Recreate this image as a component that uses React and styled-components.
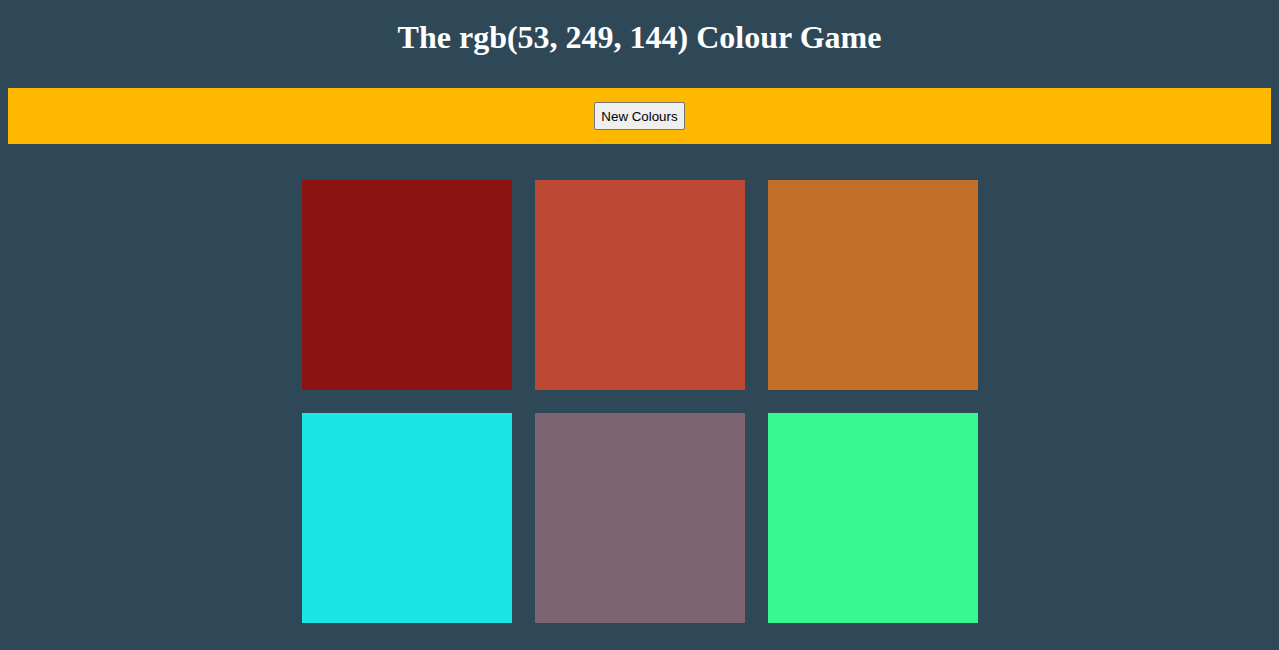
import React, { useState } from 'react'
import styled, { createGlobalStyle } from 'styled-components'

const GlobalStyle = createGlobalStyle`
  html, body {
    margin: 0;
    background: #2f4858;
  }
  body {
    padding: 8px;
    font-family: "Liberation Serif", "Times New Roman", serif;
  }
`

const Title = styled.h1`
  margin: 11px 0 32px;
  font-size: 32px;
  line-height: 37px;
  font-weight: bold;
  color: #ffffff;
  text-align: center;
`

const Bar = styled.div`
  height: 56px;
  background: #ffb800;
  display: flex;
  align-items: center;
  justify-content: center;
`

const NewButton = styled.button`
  font-family: "Liberation Sans", Arial, sans-serif;
  font-size: 13.33px;
  height: 28px;
  padding: 0 6px;
  color: #000;
  background: #efefef;
  border: 1px solid #767676;
  border-radius: 2px;
`

const Board = styled.div`
  width: 676px;
  margin: 36px auto 0;
  display: grid;
  grid-template-columns: repeat(3, 210px);
  gap: 23px;
`

const Square = styled.div`
  width: 210px;
  height: 210px;
  background: ${p => p.$colour};
`

const colours = [
  'rgb(139, 20, 18)',
  'rgb(189, 72, 51)',
  'rgb(194, 112, 41)',
  'rgb(26, 230, 230)',
  'rgb(124, 101, 112)',
  'rgb(53, 249, 144)',
]

const App = () => {
  const [squares] = useState(colours)
  return (
    <>
      <GlobalStyle />
      <Title>The rgb(53, 249, 144) Colour Game</Title>
      <Bar>
        <NewButton>New Colours</NewButton>
      </Bar>
      <Board>
        {squares.map((c, i) => (
          <Square key={i} $colour={c} />
        ))}
      </Board>
    </>
  )
}

export default App
